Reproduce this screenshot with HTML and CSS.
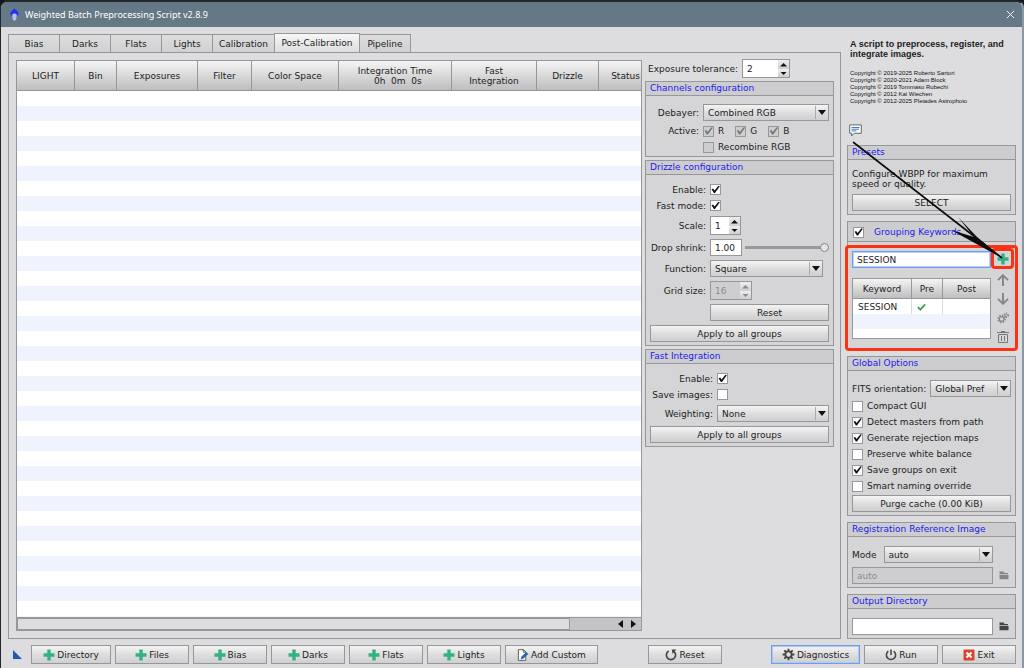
FILE: index.html
```html
<!DOCTYPE html>
<html lang="en">
<head>
<meta charset="utf-8">
<title>Weighted Batch Preprocessing Script v2.8.9</title>
<link rel="stylesheet" href="styles.css">
</head>
<body>
<svg class="defs" aria-hidden="true">
  <symbol id="plus" viewBox="0 0 12 12"><path d="M4.3.5h3.4v3.8h3.8v3.4H7.7v3.8H4.3V7.7H.5V4.3h3.8z" fill="#34b183"/></symbol>
  <symbol id="folder" viewBox="0 0 10 9"><path d="M.5.500h4l1.200 1.500h3.300V3.200H.5zM.5 3.900h9v4.300h-9z" fill="currentColor"/></symbol>
  <symbol id="gear" viewBox="0 0 14 14"><g fill="none" stroke="currentColor"><circle cx="7" cy="7" r="3.4" stroke-width="2"/><path d="M7 .7v2.4M7 10.9v2.4M.7 7h2.4M10.9 7h2.4M2.5 2.5l1.8 1.8M9.7 9.7l1.8 1.8M11.5 2.5L9.7 4.3M4.3 9.7l-1.8 1.8" stroke-width="2"/></g></symbol>
</svg>
<div class="window">
  <header class="titlebar">
    <svg class="logo" viewBox="0 0 12 14"><path d="M6 0l3 2.500 2 3-2 2.500-3-1-3 1-2-2.500 2-3z" fill="#2433ee"/><path d="M3.500 6.500L6 5l2.500 1.500-.7 5.500L6 13.500 4.200 12z" fill="#b7bdf5"/></svg>
    <h1>Weighted Batch Preprocessing Script v2.8.9</h1>
    <button class="close" aria-label="Close"><svg viewBox="0 0 10 10"><path d="M1 1l8 8M9 1L1 9" stroke="#f4f6f7" stroke-width="1.100"/></svg></button>
  </header>

  <div class="workspace">
    <main class="main">
      <nav class="tabs">
        <button class="tab">Bias</button><button class="tab">Darks</button><button class="tab">Flats</button><button class="tab">Lights</button><button class="tab tab-wide">Calibration</button><button class="tab active">Post-Calibration</button><button class="tab">Pipeline</button>
      </nav>
      <div class="panel">
        <section class="list">
          <div class="rows">
            <table class="groups-table">
              <colgroup><col class="c1"><col class="c2"><col class="c3"><col class="c4"><col class="c5"><col class="c6"><col class="c7"><col class="c8"><col class="c9"></colgroup>
              <thead><tr><th>LIGHT</th><th>Bin</th><th>Exposures</th><th>Filter</th><th>Color Space</th><th class="pre">Integration Time
  0h  0m  0s</th><th>Fast<br>Integration</th><th>Drizzle</th><th>Status</th></tr></thead>
            </table>
          </div>
          <div class="hscroll"><span class="thumb"></span><button class="arrow-left" aria-label="Scroll left"></button><button class="arrow-right" aria-label="Scroll right"></button></div>
        </section>

        <section class="settings">
          <div class="tolerance"><label for="tol">Exposure tolerance:</label>
            <span class="spin spin-l"><input id="tol" type="text" value="2"><span class="steps"><button aria-label="Increase"></button><button aria-label="Decrease"></button></span></span></div>

          <section class="box channels">
            <h2>Channels configuration</h2>
            <div class="form">
              <label for="debayer">Debayer:</label>
              <span class="select"><select id="debayer"><option>Combined RGB</option></select></span>
              <span class="lab">Active:</span>
              <span class="checks"><label><input type="checkbox" checked disabled>R</label><label><input type="checkbox" checked disabled>G</label><label><input type="checkbox" checked disabled>B</label></span>
              <span></span>
              <span class="checks"><label><input type="checkbox" disabled>Recombine RGB</label></span>
            </div>
          </section>

          <section class="box drizzle">
            <h2>Drizzle configuration</h2>
            <div class="form">
              <label for="dEnable">Enable:</label><input id="dEnable" type="checkbox" checked>
              <label for="fast">Fast mode:</label><input id="fast" type="checkbox" checked>
              <label for="scale">Scale:</label>
              <span class="spin spin-s"><input id="scale" type="text" value="1"><span class="steps"><button aria-label="Increase"></button><button aria-label="Decrease"></button></span></span>
              <label for="shrink">Drop shrink:</label>
              <span class="shrink"><input id="shrink" class="text" type="text" value="1.00"><input class="slider" type="range" value="100" aria-label="Drop shrink"></span>
              <label for="func">Function:</label>
              <span class="select short"><select id="func"><option>Square</option></select></span>
              <label for="grid">Grid size:</label>
              <span class="spin spin-m off"><input id="grid" type="text" value="16" disabled><span class="steps"><button aria-label="Increase" disabled></button><button aria-label="Decrease" disabled></button></span></span>
              <span></span><button class="btn">Reset</button>
              <button class="btn full">Apply to all groups</button>
            </div>
          </section>

          <section class="box fast">
            <h2>Fast Integration</h2>
            <div class="form">
              <label for="fEnable">Enable:</label><input id="fEnable" type="checkbox" checked>
              <label for="save">Save images:</label><input id="save" type="checkbox">
              <label for="weight">Weighting:</label>
              <span class="select"><select id="weight"><option>None</option></select></span>
              <button class="btn full">Apply to all groups</button>
            </div>
          </section>
        </section>
      </div>
    </main>

    <aside class="side">
      <div class="about">
        <p class="lead">A script to preprocess, register, and integrate images.</p>
        <p class="copy">Copyright © 2019-2025 Roberto Sartori<br>Copyright © 2020-2021 Adam Block<br>Copyright © 2019 Tommaso Rubechi<br>Copyright © 2012 Kai Wiechen<br>Copyright © 2012-2025 Pleiades Astrophoto</p>
        <button class="icon bubble" aria-label="Notes"><svg viewBox="0 0 13 13"><path d="M.7.900h11.600v8.400H5.200L2.600 12V9.300H.7z" fill="#fff" stroke="#666" stroke-width="1"/><path d="M2.500 3.500h8M2.500 5.200h7.500M2.500 6.900h5" stroke="#3a82cc"/></svg></button>
      </div>

      <section class="box">
        <h2>Presets</h2>
        <div class="body presets"><p>Configure WBPP for maximum speed or quality.</p><button class="btn">SELECT</button></div>
      </section>

      <section class="box grouping">
        <h2><label><input type="checkbox" checked>Grouping Keywords</label></h2>
        <div class="body keywords">
          <div class="kw-main">
            <input class="text focus" type="text" value="SESSION" aria-label="Keyword" autofocus>
            <div class="kw-list">
              <table>
                <colgroup><col class="k1"><col class="k2"><col></colgroup>
                <thead><tr><th>Keyword</th><th>Pre</th><th>Post</th></tr></thead>
                <tbody><tr><td>SESSION</td><td><svg class="tick" viewBox="0 0 10 8"><path d="M1 4.200L3.700 7 9 1" fill="none" stroke="#35a352" stroke-width="2"/></svg></td><td></td></tr></tbody>
              </table>
            </div>
          </div>
          <div class="kw-tools">
            <button class="icon add" aria-label="Add"><svg><use href="#plus"/></svg></button>
            <button class="icon" aria-label="Move up"><svg viewBox="0 0 12 12"><path d="M6 12V1.500M1 6.200l5-5 5 5" fill="none" stroke="#858585" stroke-width="1.900"/></svg></button>
            <button class="icon" aria-label="Move down"><svg viewBox="0 0 12 12"><path d="M6 0v10.500M1 5.800l5 5 5-5" fill="none" stroke="#858585" stroke-width="1.900"/></svg></button>
            <button class="icon" aria-label="Settings"><svg viewBox="0 0 13 13"><g fill="none" stroke="#858585"><circle cx="5" cy="7.500" r="2.600" stroke-width="1.400"/><circle cx="5" cy="7.500" r="4" stroke-width="1.500" stroke-dasharray="1.600 1.540"/><circle cx="10" cy="3.500" r="1.300"/><circle cx="10" cy="3.500" r="2.400" stroke-width="1.200" stroke-dasharray="1.200 1.300"/></g></svg></button>
            <button class="icon" aria-label="Delete"><svg viewBox="0 0 12 12"><path d="M0 1.500h12M4 .5h4M1.500 3.500v8h9v-8zM4.500 5v5M7.500 5v5" fill="none" stroke="#777"/></svg></button>
          </div>
          <span class="mark"></span>
        </div>
      </section>

      <section class="box">
        <h2>Global Options</h2>
        <div class="body options">
          <div class="line"><label for="fits">FITS orientation:</label><span class="select"><select id="fits"><option>Global Pref</option></select></span></div>
          <div class="optlist">
            <label><input type="checkbox">Compact GUI</label>
            <label><input type="checkbox" checked>Detect masters from path</label>
            <label><input type="checkbox" checked>Generate rejection maps</label>
            <label><input type="checkbox">Preserve white balance</label>
            <label><input type="checkbox" checked>Save groups on exit</label>
            <label><input type="checkbox">Smart naming override</label>
          </div>
          <button class="btn">Purge cache (0.00 KiB)</button>
        </div>
      </section>

      <section class="box">
        <h2>Registration Reference Image</h2>
        <div class="body reference">
          <div class="line mode"><label for="mode">Mode</label><span class="select"><select id="mode"><option>auto</option></select></span></div>
          <div class="line path"><input class="text" type="text" value="auto" disabled aria-label="Reference image"><button class="icon dim" aria-label="Browse"><svg><use href="#folder"/></svg></button></div>
        </div>
      </section>

      <section class="box">
        <h2>Output Directory</h2>
        <div class="body"><div class="line path"><input class="text" type="text" aria-label="Output directory"><button class="icon" aria-label="Browse"><svg><use href="#folder"/></svg></button></div></div>
      </section>

      <svg class="pointer" viewBox="0 0 170 130" aria-hidden="true"><path d="M6 2L155 118" stroke="#0b0b0b" stroke-width="1.600"/><path d="M155 118l-51-28 23 7-16-20 19 20z" fill="#0b0b0b"/></svg>
    </aside>
  </div>

  <footer class="actions">
    <svg class="corner" viewBox="0 0 9 9"><path d="M0 0l9 9H0z" fill="#2459ad"/></svg>
    <button class="btn w80"><svg><use href="#plus"/></svg>Directory</button>
    <button class="btn"><svg><use href="#plus"/></svg>Files</button>
    <button class="btn"><svg><use href="#plus"/></svg>Bias</button>
    <button class="btn"><svg><use href="#plus"/></svg>Darks</button>
    <button class="btn"><svg><use href="#plus"/></svg>Flats</button>
    <button class="btn"><svg><use href="#plus"/></svg>Lights</button>
    <button class="btn w93"><svg viewBox="0 0 12 13"><path d="M1 .7h5.500L9 3.200v9.100H1z" fill="#fff" stroke="#555"/><path d="M6.300.7v2.700H9" fill="none" stroke="#555"/><path d="M3.500 11.500l.9-3.300 5.200-5 2.200 2.200-5.200 5z" fill="#2567b8"/></svg>Add Custom</button>
    <button class="btn reset"><svg viewBox="0 0 13 13"><path d="M4 2.200a5 5 0 1 0 5.800.6" fill="none" stroke="#444" stroke-width="1.800"/><path d="M7.300.5h5L8.200 5.300z" fill="#444"/></svg>Reset</button>
    <button class="btn w89 default"><svg class="dark"><use href="#gear"/></svg>Diagnostics</button>
    <button class="btn"><svg viewBox="0 0 13 13"><path d="M3.600 2.300a5 5 0 1 0 5.800 0M6.500.5v6" fill="none" stroke="#444" stroke-width="1.700"/></svg>Run</button>
    <button class="btn"><svg viewBox="0 0 12 12"><rect x=".5" y=".5" width="11" height="11" rx="1" fill="#d8452c"/><path d="M3.500 3.500l5 5M8.500 3.500l-5 5" stroke="#fff" stroke-width="2"/></svg>Exit</button>
  </footer>
</div>
</body>
</html>
```
FILE: styles.css
```css
* { box-sizing: border-box; }
body {
  margin: 0;
  background: #15171c;
  color: #1c1c1c;
  font: 9px/10px "DejaVu Sans", Verdana, sans-serif;
}
button, input, select { font: inherit; color: inherit; margin: 0; padding: 0; border-radius: 0; }
button { border: 0; background: none; }
h1, h2, p { margin: 0; font-weight: normal; }
.defs { display: none; }

.window {
  display: flex;
  flex-direction: column;
  min-height: 100vh;
  padding: 0 6px 4px 7px;
  border: solid;
  border-width: 2px 2px 1px 1px;
  border-color: #24272b #8898a4 #a4acb2 #24272b;
  border-radius: 8px 8px 0 0;
  background: #dddddf;
}
.titlebar {
  display: flex;
  align-items: center;
  gap: 5px;
  height: 25px;
  margin: 0 -6px 0 -7px;
  padding: 0 7px 0 8px;
  border-radius: 6px 6px 0 0;
  background: #647985;
  color: #fff;
}
.titlebar h1 { flex: 1; font: 9px/14px "Noto Sans", "Open Sans", sans-serif; }
.logo { width: 11px; height: 14px; }
.close svg { display: block; width: 9px; height: 9px; }

.workspace { display: flex; flex: 1; gap: 6px; padding-top: 6px; }
.main { display: flex; flex: 1; flex-direction: column; min-width: 0; }
.tabs { display: flex; align-items: flex-end; height: 20px; margin-bottom: -1px; }
.tab {
  width: 52px;
  height: 19px;
  margin-right: -1px;
  border: 1px solid #97979a;
  background: linear-gradient(#dededf, #d0d0d2);
}
.tab-wide { width: 63px; }
.tab.active { width: 86px; height: 20px; border-bottom-color: #dddddf; background: linear-gradient(#f7f7f7, #dddddf); }
.panel { display: flex; flex: 1; gap: 3px; padding: 7px 6px 7px 7px; border: 1px solid #97979a; }

.list { display: flex; flex: 1; flex-direction: column; min-width: 0; border: 1px solid #97979a; }
.rows {
  flex: 1;
  overflow: hidden;
  background: repeating-linear-gradient(#fff 0 15px, #eff3fd 15px 30px);
}
table { border-collapse: separate; border-spacing: 0; table-layout: fixed; }
th {
  padding: 0;
  border: solid #97979a;
  border-width: 0 1px 1px 0;
  background: linear-gradient(#f5f5f5, #d9d9da 50%, #bebec0);
  font-weight: normal;
  text-align: center;
}
.groups-table { width: 636px; }
.groups-table th { height: 30px; }
.pre { white-space: pre; }
.c1 { width: 58px; } .c2 { width: 42px; } .c3 { width: 81px; } .c4 { width: 54px; } .c5 { width: 87px; }
.c6 { width: 113px; } .c7 { width: 85px; } .c8 { width: 62px; } .c9 { width: 54px; }
.hscroll { display: flex; align-items: center; gap: 8px; height: 13px; padding-right: 5px; border-top: 1px solid #97979a; background: #c4c4c6; }
.thumb { flex: 1; align-self: stretch; margin-right: 40px; border: 1px solid #97979a; background: #dddddf; }
.arrow-left, .arrow-right { width: 5px; height: 8px; background: #111; clip-path: polygon(0 50%, 100% 0, 100% 100%); }
.arrow-right { clip-path: polygon(0 0, 100% 50%, 0 100%); }

.settings { display: flex; flex-direction: column; gap: 3px; width: 189px; margin-top: -1px; }
.tolerance { display: flex; align-items: center; gap: 4px; height: 19px; padding-left: 3px; }
.box { border: 1px solid #97979a; background: #d5d5d7; }
.box h2 { height: 14px; padding-left: 4px; border-bottom: 1px solid #97979a; background: #cdcdcf; color: #1a1af0; font-size: 9px; line-height: 12px; }
.form { display: grid; gap: 4px; align-items: center; justify-items: start; padding: 9px 4px 3px; }
.channels .form { grid-template-columns: 49px minmax(0, 1fr); padding-top: 8px; }
.drizzle .form { grid-template-columns: 56px minmax(0, 1fr); }
.fast .form { grid-template-columns: 63px minmax(0, 1fr); }
.form > label, .lab { justify-self: end; white-space: nowrap; }
.full { grid-column: 1 / -1; }
.form > .btn { width: 100%; }

.btn {
  height: 17px;
  border: 1px solid #97979a;
  background: linear-gradient(#f4f4f4, #dededf 50%, #cfcfd1);
  text-align: center;
}
.text, .spin {
  height: 17px;
  border: 1px solid #97979a;
  background: #fff;
}
.text { min-width: 0; padding: 0 4px; }
.text:disabled { background: #ceced0; color: #8c8c8e; }
.spin { display: flex; height: 19px; }
.spin input { flex: 1; min-width: 0; padding-left: 4px; border: 0; background: none; }
.spin-l { width: 48px; } .spin-m { width: 42px; } .spin-s { width: 31px; }
.steps { display: flex; flex-direction: column; width: 11px; background: #dadadc; }
.steps button { position: relative; flex: 1; background: linear-gradient(#eee, #cfcfd1); }
.steps button::after { content: ""; position: absolute; inset: 3px 2px 2px; background: #111; clip-path: polygon(50% 0, 100% 100%, 0 100%); }
.steps button:last-child::after { clip-path: polygon(0 0, 100% 0, 50% 100%); }
.off { background: #ceced0; color: #8c8c8e; }
.off .steps button::after { background: #8c8c8e; }

.select { position: relative; display: flex; width: 100%; height: 17px; }
.short { width: 113px; }
.select select { width: 100%; padding: 0 16px 0 4px; border: 1px solid #97979a; background: linear-gradient(#f4f4f4, #dededf 50%, #cfcfd1); appearance: none; }
.select::before { content: ""; position: absolute; top: 2px; right: 13px; bottom: 2px; width: 1px; background: #aaaaac; pointer-events: none; }
.select::after { content: ""; position: absolute; top: 6px; right: 3px; width: 8px; height: 5px; background: #111; clip-path: polygon(0 0, 100% 0, 50% 100%); pointer-events: none; }

input[type="checkbox"] { display: grid; flex: none; width: 11px; height: 11px; border: 1px solid #97979a; background: #fff; appearance: none; }
input[type="checkbox"]:checked::before {
  content: "";
  width: 9px;
  height: 9px;
  background: #111;
  clip-path: polygon(6% 48%, 24% 40%, 40% 62%, 82% 8%, 98% 14%, 44% 90%, 32% 90%);
}
input[type="checkbox"]:disabled { background: #cdcdcf; }
input[type="checkbox"]:disabled::before { background: #777; }
.form > input[type="checkbox"] { margin-bottom: 1px; }
.checks { display: flex; gap: 11px; height: 12px; }
.checks label { display: flex; align-items: center; gap: 4px; }
.shrink { display: flex; align-items: center; gap: 3px; width: 100%; }
.shrink .text { width: 32px; }
.slider { flex: 1; min-width: 0; height: 10px; background: linear-gradient(#999, #999) center / 100% 3px no-repeat; appearance: none; }
.slider::-webkit-slider-thumb { width: 9px; height: 9px; border: 1px solid #888; border-radius: 50%; background: #e4e4e6; appearance: none; }

.side { position: relative; display: flex; flex-direction: column; gap: 6px; width: 169px; }
.about { height: 106px; padding: 6px 2px 0 3px; font-family: "Liberation Sans", Arial, sans-serif; }
.lead { font-weight: bold; }
.copy { margin-top: 11px; font-size: 6px; line-height: 7px; color: #111; white-space: nowrap; }
.icon { display: grid; place-items: center; color: #444; }
.icon svg { display: block; width: 12px; height: 12px; }
.bubble { margin: 19px 0 0 -1px; }
.bubble svg { width: 13px; height: 13px; }
.body { padding: 9px 4px 3px; }
.body .btn { display: block; width: 100%; }
.presets p { margin-bottom: 5px; }
.grouping h2 { height: 20px; padding: 4px 5px; }
.grouping h2 label { display: flex; align-items: center; gap: 10px; }
.keywords { position: relative; display: flex; gap: 4px; padding: 9px 4px 3px; }
.kw-main { display: flex; flex: 1; flex-direction: column; gap: 10px; min-width: 0; }
.focus { outline: 0; border: 1px solid #6f9fe8; box-shadow: inset 0 0 0 1px #b5d0fa; }
.kw-list { height: 61px; border: 1px solid #97979a; background: repeating-linear-gradient(#fff 0 15px, #eff3fd 15px 30px) 0 20px; }
.kw-list table { width: 100%; }
.kw-list th { height: 20px; }
.kw-list td { height: 15px; padding: 0 5px; border-right: 1px solid #dcdcde; background: #fff; }
.kw-list th:last-child, .kw-list td:last-child { border-right: 0; }
.k1 { width: 59px; } .k2 { width: 31px; }
.tick { display: block; width: 9px; height: 8px; }
.kw-tools { display: grid; grid-template-rows: 22px; grid-auto-rows: 19px; width: 16px; height: 98px; margin-top: -3px; }
.add { position: relative; }
.add::after { content: ""; position: absolute; inset: 0 -3px 1px -4px; border: 3px solid #fb3214; border-radius: 4px; }
.mark { position: absolute; inset: 3px -3px -2px; border: 3px solid #fb3214; border-radius: 4px; pointer-events: none; }
.line { display: flex; align-items: center; gap: 4px; white-space: nowrap; }
.line .select { flex: 1; width: auto; }
.optlist { display: grid; gap: 4px; margin: 3px 0; }
.optlist label { display: flex; align-items: center; gap: 4px; height: 12px; }
.reference { display: grid; gap: 4px; }
.mode { gap: 7px; padding-right: 18px; }
.path .text { flex: 1; }
.path .icon { width: 14px; }
.path svg { width: 10px; height: 9px; }
.dim { color: #858585; }
.pointer { position: absolute; top: 107px; left: 0; width: 170px; height: 130px; pointer-events: none; }

.actions { display: flex; align-items: center; gap: 4px; padding-top: 6px; }
.actions .btn { display: flex; align-items: center; justify-content: center; gap: 2px; width: 74px; height: 19px; white-space: nowrap; }
.actions .btn svg { width: 12px; height: 12px; }
.actions .btn .dark { width: 13px; height: 13px; color: #444; }
.actions .corner { width: 9px; height: 9px; margin: 0 5px; }
.actions .w80 { width: 80px; }
.actions .w93 { width: 93px; }
.actions .w89 { width: 89px; margin-left: auto; }
.actions .reset { margin-left: 46px; }
.actions .default { border: 1px solid #6f9fe8; box-shadow: inset 0 0 0 1px #a9c8f8; }
```
